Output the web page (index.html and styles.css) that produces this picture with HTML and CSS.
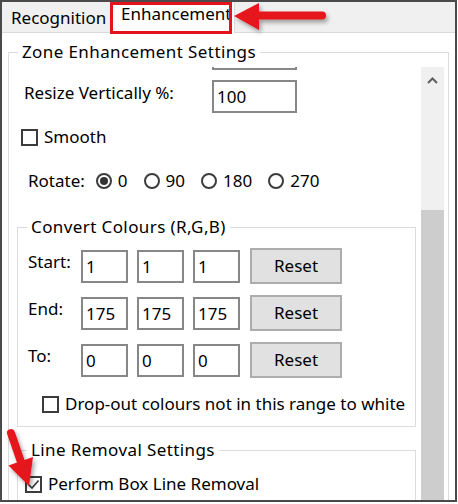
FILE: index.html
```html
<!DOCTYPE html>
<html lang="en">
<head>
	<meta charset="UTF-8">
	<title>Enhancement</title>
	<link rel="stylesheet" href="styles.css">
</head>
<body>
	<div class="window">
		<!-- Tabs -->
		<div class="tabbar">
			<div class="tab">Recognition</div>
			<div class="tab selected">Enhancement</div>
		</div>

		<!-- Enhancement page -->
		<div class="page">
			<fieldset class="group zone">
				<legend>Zone Enhancement Settings</legend>
				<div class="scroller">
					<div class="scrollview">
						<div class="inner">
							<div class="row">
								<input type="text" class="field wide pushed" value="">
							</div>
							<div class="row resize">
								<label class="caption">Resize Vertically %:</label>
								<input type="text" class="field wide" value="100">
							</div>
							<label class="check smooth"><span class="box"></span>Smooth</label>
							<div class="row rotate">
								<span class="rotlabel">Rotate:</span>
								<label class="radio"><span class="circle on"></span>0</label>
								<label class="radio"><span class="circle"></span>90</label>
								<label class="radio"><span class="circle"></span>180</label>
								<label class="radio"><span class="circle"></span>270</label>
							</div>

							<!-- Convert colours -->
							<fieldset class="group colours">
								<legend>Convert Colours (R,G,B)</legend>
								<div class="rgbrow">
									<span class="rgblabel">Start:</span>
									<input type="text" class="field rgb" value="1">
									<input type="text" class="field rgb" value="1">
									<input type="text" class="field rgb" value="1">
									<button class="btn">Reset</button>
								</div>
								<div class="rgbrow">
									<span class="rgblabel">End:</span>
									<input type="text" class="field rgb" value="175">
									<input type="text" class="field rgb" value="175">
									<input type="text" class="field rgb" value="175">
									<button class="btn">Reset</button>
								</div>
								<div class="rgbrow">
									<span class="rgblabel">To:</span>
									<input type="text" class="field rgb" value="0">
									<input type="text" class="field rgb" value="0">
									<input type="text" class="field rgb" value="0">
									<button class="btn">Reset</button>
								</div>
								<label class="check dropout"><span class="box"></span>Drop-out colours not in this range to white</label>
							</fieldset>

							<!-- Line removal -->
							<fieldset class="group lines">
								<legend>Line Removal Settings</legend>
								<label class="check perform"><span class="box"><svg width="13" height="13" viewBox="0 0 13 13"><polyline points="1.5,6.5 5,10 11.5,2.5" fill="none" stroke="#333" stroke-width="1.6"/></svg></span>Perform Box Line Removal</label>
							</fieldset>
						</div>
					</div>
					<div class="scrollbar">
						<div class="sb-up"><svg width="11" height="7" viewBox="0 0 11 7"><polyline points="1,6 5.5,1.5 10,6" fill="none" stroke="#606060" stroke-width="2"/></svg></div>
						<div class="sb-track"></div>
						<div class="sb-thumb"></div>
					</div>
				</div>
			</fieldset>
		</div>
	</div>

	<!-- Callouts drawn over the screenshot -->
	<svg class="callout" width="458" height="504" viewBox="0 0 458 504">
		<defs>
			<filter id="shadow" x="-20%" y="-50%" width="140%" height="200%">
				<feDropShadow dx="2" dy="3" stdDeviation="2" flood-color="#000" flood-opacity="0.35"/>
			</filter>
		</defs>
		<rect x="111.5" y="3.5" width="119" height="29" fill="none" stroke="#e5141c" stroke-width="3"/>
		<g filter="url(#shadow)" fill="#e5141c" stroke="#e5141c">
			<line x1="256" y1="15.5" x2="322" y2="15.5" stroke-width="8" stroke-linecap="round"/>
			<polygon points="234,16 259,3 259,30" stroke="none"/>
		</g>
		<g filter="url(#shadow)" fill="#e5141c" stroke="#e5141c">
			<line x1="11" y1="433" x2="21" y2="462" stroke-width="8" stroke-linecap="round"/>
			<polygon points="29,486 33,457 8.5,465.5" stroke="none"/>
		</g>
	</svg>
</body>
</html>
```

FILE: styles.css
```css
body {
	margin: 0;
	position: relative;
	background: #fff;
	font-family: "Noto Sans", "Open Sans", sans-serif;
	font-size: 17px;
	line-height: 20px;
	color: #000;
}

.window {
	width: 457px;
	height: 502px;
	box-sizing: border-box;
	border: 2px solid #4a4a4a;
	overflow: hidden;
	background: #fff;
}

/* Tabs */
.tabbar {
	display: flex;
	height: 30px;
	background: #f0f0f0;
	border-bottom: 1px solid #dadada;
}
.tab {
	width: 108px;
	padding: 6px 0 0 9px;
	box-sizing: border-box;
}
.tab.selected {
	width: 125px;
	height: 31px;
	padding: 2px 0 0 11px;
	background: #fff;
	border-right: 1px solid #dadada;
}

/* Page */
.page {
	height: 467px;
	overflow: hidden;
}

.group {
	margin: 0;
	padding: 0;
	border: 1px solid #dcdcdc;
	min-inline-size: 0;
}
.group legend {
	margin-left: 9px;
	padding: 0 4px;
	line-height: 20px;
	letter-spacing: 0.4px;
}
.group.zone {
	margin: 9px 6px 0 6px;
	padding-right: 4px;
}

.scroller {
	display: flex;
	height: 440px;
	margin-top: 5px;
}
.scrollview {
	flex: 1;
	overflow: hidden;
}
.inner {
	margin-top: -30px;
}

.scrollbar {
	width: 23px;
	display: flex;
	flex-direction: column;
}
.sb-up {
	height: 25px;
	background: #f0f0f0;
	display: flex;
	justify-content: center;
	padding-top: 10px;
	box-sizing: border-box;
}
.sb-track {
	height: 118px;
	background: #f0f0f0;
}
.sb-thumb {
	flex: 1;
	background: #cdcdcd;
}

/* Rows */
.row {
	display: flex;
	align-items: flex-start;
}
.row.resize {
	margin-top: 10px;
}
.caption {
	width: 203px;
	padding: 3px 0 0 15px;
	box-sizing: border-box;
}
.field {
	height: 33px;
	margin: 0;
	padding: 0 0 0 3px;
	box-sizing: border-box;
	border: 2px solid #878787;
	background: #fff;
	font: inherit;
	color: #000;
	outline: none;
}
.field.wide {
	width: 85px;
}
.field.pushed {
	margin-left: 203px;
}

/* Check boxes and radios */
.check {
	display: flex;
	align-items: center;
	height: 20px;
}
.box {
	width: 17px;
	height: 17px;
	box-sizing: border-box;
	border: 2px solid #3c3c3c;
	margin-right: 6px;
	display: flex;
	align-items: center;
	justify-content: center;
	background: #fff;
}
.check.smooth {
	margin-top: 14px;
}
.check.smooth .box {
	margin-left: 12px;
}

.row.rotate {
	margin-top: 24px;
	align-items: center;
	height: 20px;
}
.rotlabel {
	margin: 0 11px 0 19px;
}
.radio {
	display: flex;
	align-items: center;
	margin-right: 16px;
}
.circle {
	width: 16px;
	height: 16px;
	box-sizing: border-box;
	border: 2px solid #3c3c3c;
	border-radius: 50%;
	margin-right: 6px;
	display: flex;
	align-items: center;
	justify-content: center;
}
.circle.on::after {
	content: "";
	width: 8px;
	height: 8px;
	border-radius: 50%;
	background: #333;
}

/* Convert colours */
.group.colours {
	margin: 26px 5px 0 8px;
	padding-bottom: 12px;
}
.rgbrow {
	display: flex;
	align-items: center;
	height: 36px;
	margin-top: 11px;
}
.rgblabel {
	align-self: flex-start;
	width: 63px;
	padding: 4px 0 0 10px;
	box-sizing: border-box;
}
.field.rgb {
	width: 47px;
	margin-right: 9px;
}
.btn {
	width: 92px;
	height: 36px;
	margin-left: 1px;
	border: 2px solid #adadad;
	background: #e1e1e1;
	font: inherit;
	color: #000;
	padding: 0;
}
.check.dropout {
	margin-top: 16px;
}
.check.dropout .box {
	margin-left: 24px;
}

/* Line removal */
.group.lines {
	margin: 13px 5px 0 8px;
	height: 80px;
}
.check.perform {
	margin-top: 14px;
}
.check.perform .box {
	margin-left: 7px;
}

.callout {
	position: absolute;
	left: 0;
	top: 0;
	pointer-events: none;
}
```
